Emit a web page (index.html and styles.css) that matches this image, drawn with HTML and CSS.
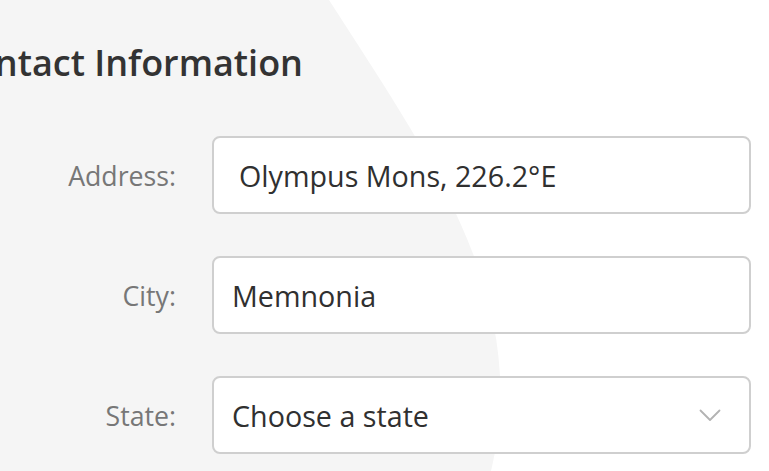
FILE: index.html
```html
<!DOCTYPE html>
<html lang="en">
<head>
<meta charset="utf-8">
<title>Contact Information</title>
<link rel="stylesheet" href="styles.css">
</head>
<body>
<div class="page">
  <svg class="backdrop" width="769" height="471" viewBox="0 0 769 471" aria-hidden="true">
    <path d="M0,0 H329 C432,160 532,300 491,471 H0 Z" fill="#f5f5f5"/>
  </svg>
  <form class="form">
    <h2 class="title">Contact Information</h2>
    <div class="fields">
      <label class="label" for="address">Address:</label>
      <div class="control control--address"><span class="value" id="address">Olympus Mons, 226.2°E</span></div>
      <label class="label" for="city">City:</label>
      <div class="control"><span class="value" id="city">Memnonia</span></div>
      <label class="label" for="state">State:</label>
      <div class="control control--select">
        <span class="value" id="state">Choose a state</span>
        <svg class="chevron" width="22" height="13" viewBox="0 0 22 13" aria-hidden="true">
          <path d="M1.5 1.5 L11 11 L20.5 1.5" fill="none" stroke="#b3b3b3" stroke-width="1.8" stroke-linecap="round" stroke-linejoin="round"/>
        </svg>
      </div>
    </div>
  </form>
</div>
</body>
</html>
```
FILE: styles.css
```css
html, body {
  margin: 0;
  padding: 0;
  background: #ffffff;
  overflow: hidden;
}
.page {
  position: relative;
  width: 769px;
  height: 471px;
  overflow: hidden;
  font-family: "Open Sans", "Noto Sans", sans-serif;
}
.backdrop {
  position: absolute;
  left: 0;
  top: 0;
}
.form {
  position: relative;
  display: flex;
  flex-direction: column;
  padding: 0 18px 0 0;
}
.title {
  margin: 38px 0 0 -50px;
  font-size: 36px;
  line-height: 50px;
  font-weight: 600;
  color: #333333;
  white-space: nowrap;
}
.fields {
  display: grid;
  grid-template-columns: 176px 539px;
  column-gap: 36px;
  row-gap: 42px;
  margin-top: 48px;
  align-items: center;
}
.label {
  justify-self: end;
  font-size: 26.7px;
  color: #777777;
}
.control {
  box-sizing: border-box;
  height: 78px;
  display: flex;
  align-items: center;
  padding: 0 28px 0 18px;
  background: #ffffff;
  border: 2px solid #cfcfcf;
  border-radius: 8px;
  font-size: 28.7px;
  color: #303030;
}
.control--address {
  padding-left: 25px;
}
.control--select {
  justify-content: space-between;
}
.value {
  white-space: nowrap;
}
.chevron {
  display: block;
}
```
